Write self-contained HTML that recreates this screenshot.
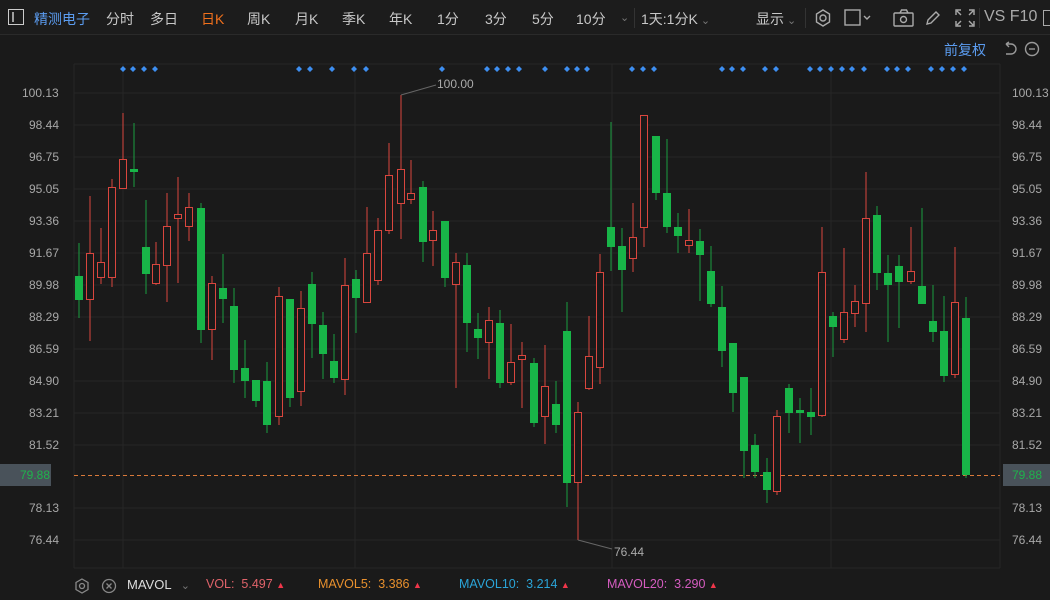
<!DOCTYPE html>
<html><head><meta charset="utf-8"><style>
*{margin:0;padding:0;box-sizing:border-box}
body{width:1050px;height:600px;background:#1a1a1a;overflow:hidden;font-family:"Liberation Sans","Noto Sans CJK SC",sans-serif;color:#bbb;position:relative}
.top{position:absolute;left:0;top:0;width:1050px;height:35px;background:#1c1c1c;border-bottom:1px solid #2a2a2a}
.t{position:absolute;top:9px;font-size:14px;color:#c8c8c8;white-space:nowrap}
.ax{position:absolute;font-size:12px;color:#a8a8a8}
.bot{position:absolute;top:577px;font-size:12.5px;white-space:nowrap}
</style></head><body>
<div class="top"></div>
<svg style="position:absolute;left:8px;top:9px" width="16" height="16"><rect x="0.5" y="0.5" width="15" height="15" fill="none" stroke="#ccc"/><line x1="5" y1="3" x2="5" y2="13" stroke="#ccc" stroke-width="1.5"/></svg>
<div class="t" style="left:34px;color:#5b9cf0">精测电子</div>
<div class="t" style="left:106px">分时</div>
<div class="t" style="left:150px">多日</div>
<div class="t" style="left:201px;color:#f0701c">日K</div>
<div class="t" style="left:247px">周K</div>
<div class="t" style="left:295px">月K</div>
<div class="t" style="left:342px">季K</div>
<div class="t" style="left:389px">年K</div>
<div class="t" style="left:437px">1分</div>
<div class="t" style="left:485px">3分</div>
<div class="t" style="left:532px">5分</div>
<div class="t" style="left:576px">10分</div>
<div class="t" style="left:620px;color:#777;font-size:11px;top:11px">⌄</div>
<div style="position:absolute;left:634px;top:8px;width:1px;height:20px;background:#333"></div>
<div class="t" style="left:641px">1天:1分K<span style="color:#777;font-size:11px"> ⌄</span></div>
<div class="t" style="left:756px">显示<span style="color:#777;font-size:11px"> ⌄</span></div>
<div style="position:absolute;left:805px;top:8px;width:1px;height:20px;background:#333"></div>
<svg style="position:absolute;left:813px;top:8px" width="20" height="20" fill="none" stroke="#aaa" stroke-width="1.4"><path d="M10 2l6.5 4v8L10 18l-6.5-4V6z"/><circle cx="10" cy="10" r="3"/></svg>
<svg style="position:absolute;left:844px;top:9px" width="30" height="18" fill="none" stroke="#aaa" stroke-width="1.4"><rect x="1" y="1" width="15" height="15"/><path d="M20 7l3 3 3-3"/></svg>
<svg style="position:absolute;left:893px;top:9px" width="22" height="18" fill="none" stroke="#aaa" stroke-width="1.4"><rect x="1" y="4" width="19" height="13" rx="1"/><path d="M7 4l1.5-3h5L15 4"/><circle cx="10.5" cy="10.5" r="3"/></svg>
<svg style="position:absolute;left:924px;top:9px" width="18" height="18" fill="none" stroke="#aaa" stroke-width="1.4"><path d="M3 15l1-4L12 3l3 3-8 8z"/></svg>
<svg style="position:absolute;left:955px;top:9px" width="20" height="18" fill="none" stroke="#aaa" stroke-width="1.4"><path d="M1 6V1h5M14 1h5v5M19 12v5h-5M6 17H1v-5M2 2l4 4M18 2l-4 4M18 16l-4-4M2 16l4-4"/></svg>
<div style="position:absolute;left:979px;top:8px;width:1px;height:20px;background:#333"></div>
<div class="t" style="left:984px;font-size:16px;top:8px;color:#aaa">VS F10</div>
<svg style="position:absolute;left:1043px;top:10px" width="7" height="16"><rect x="0.5" y="0.5" width="10" height="15" fill="none" stroke="#aaa"/></svg>
<div class="t" style="left:944px;top:40px;color:#5b9cf0">前复权</div>
<svg style="position:absolute;left:1002px;top:41px" width="48" height="16" fill="none" stroke="#999" stroke-width="1.4"><path d="M4 3h5a5 5 0 0 1 0 10H4M4 3l3-2M4 3l3 3"/><circle cx="30" cy="8" r="6.5"/><line x1="27" y1="8" x2="33" y2="8"/></svg>

<svg style="position:absolute;left:0;top:0" width="1050" height="600">
<g stroke="#262626" stroke-width="1">
<line x1="74" y1="93" x2="1000" y2="93"/><line x1="74" y1="125" x2="1000" y2="125"/><line x1="74" y1="157" x2="1000" y2="157"/><line x1="74" y1="189" x2="1000" y2="189"/><line x1="74" y1="221" x2="1000" y2="221"/><line x1="74" y1="253" x2="1000" y2="253"/><line x1="74" y1="285" x2="1000" y2="285"/><line x1="74" y1="317" x2="1000" y2="317"/><line x1="74" y1="349" x2="1000" y2="349"/><line x1="74" y1="381" x2="1000" y2="381"/><line x1="74" y1="413" x2="1000" y2="413"/><line x1="74" y1="445" x2="1000" y2="445"/><line x1="74" y1="508" x2="1000" y2="508"/><line x1="74" y1="540" x2="1000" y2="540"/>
<line x1="74" y1="64" x2="74" y2="568"/><line x1="123" y1="64" x2="123" y2="568"/><line x1="355" y1="64" x2="355" y2="568"/><line x1="612" y1="64" x2="612" y2="568"/><line x1="831" y1="64" x2="831" y2="568"/><line x1="1000" y1="64" x2="1000" y2="568"/>
<line x1="74" y1="64" x2="1000" y2="64"/><line x1="74" y1="568" x2="1000" y2="568"/>
</g>
<g fill="#3d8ef0">
<g id="d"></g>
<path d="M123 66l3 3-3 3-3-3zM133 66l3 3-3 3-3-3zM144 66l3 3-3 3-3-3zM155 66l3 3-3 3-3-3zM299 66l3 3-3 3-3-3zM310 66l3 3-3 3-3-3zM332 66l3 3-3 3-3-3zM354 66l3 3-3 3-3-3zM366 66l3 3-3 3-3-3zM442 66l3 3-3 3-3-3zM487 66l3 3-3 3-3-3zM497 66l3 3-3 3-3-3zM508 66l3 3-3 3-3-3zM519 66l3 3-3 3-3-3zM545 66l3 3-3 3-3-3zM567 66l3 3-3 3-3-3zM577 66l3 3-3 3-3-3zM587 66l3 3-3 3-3-3zM632 66l3 3-3 3-3-3zM643 66l3 3-3 3-3-3zM654 66l3 3-3 3-3-3zM722 66l3 3-3 3-3-3zM732 66l3 3-3 3-3-3zM743 66l3 3-3 3-3-3zM765 66l3 3-3 3-3-3zM776 66l3 3-3 3-3-3zM810 66l3 3-3 3-3-3zM820 66l3 3-3 3-3-3zM831 66l3 3-3 3-3-3zM842 66l3 3-3 3-3-3zM852 66l3 3-3 3-3-3zM864 66l3 3-3 3-3-3zM887 66l3 3-3 3-3-3zM897 66l3 3-3 3-3-3zM908 66l3 3-3 3-3-3zM931 66l3 3-3 3-3-3zM942 66l3 3-3 3-3-3zM953 66l3 3-3 3-3-3zM964 66l3 3-3 3-3-3z"/>
</g>
<line x1="74" y1="475.5" x2="1000" y2="475.5" stroke="#d9793a" stroke-dasharray="4,3"/>
<!-- green -->
<g stroke="#1a9e40" fill="#18b548">
<line x1="79" y1="243" x2="79" y2="318"/><rect x="75" y="276" width="8" height="24" stroke="none"/>
<line x1="134" y1="123" x2="134" y2="187"/><rect x="130" y="169" width="8" height="3" stroke="none"/>
<line x1="146" y1="200" x2="146" y2="294"/><rect x="142" y="247" width="8" height="27" stroke="none"/>
<line x1="201" y1="203" x2="201" y2="343"/><rect x="197" y="208" width="8" height="122" stroke="none"/>
<line x1="223" y1="254" x2="223" y2="323"/><rect x="219" y="288" width="8" height="11" stroke="none"/>
<line x1="234" y1="288" x2="234" y2="383"/><rect x="230" y="306" width="8" height="64" stroke="none"/>
<line x1="245" y1="340" x2="245" y2="398"/><rect x="241" y="368" width="8" height="13" stroke="none"/>
<line x1="256" y1="380" x2="256" y2="407"/><rect x="252" y="380" width="8" height="21" stroke="none"/>
<line x1="267" y1="362" x2="267" y2="433"/><rect x="263" y="381" width="8" height="44" stroke="none"/>
<line x1="290" y1="299" x2="290" y2="407"/><rect x="286" y="299" width="8" height="99" stroke="none"/>
<line x1="312" y1="272" x2="312" y2="358"/><rect x="308" y="284" width="8" height="40" stroke="none"/>
<line x1="323" y1="312" x2="323" y2="379"/><rect x="319" y="325" width="8" height="29" stroke="none"/>
<line x1="334" y1="334" x2="334" y2="383"/><rect x="330" y="361" width="8" height="17" stroke="none"/>
<line x1="356" y1="270" x2="356" y2="333"/><rect x="352" y="279" width="8" height="19" stroke="none"/>
<line x1="423" y1="181" x2="423" y2="262"/><rect x="419" y="187" width="8" height="55" stroke="none"/>
<line x1="445" y1="221" x2="445" y2="287"/><rect x="441" y="221" width="8" height="57" stroke="none"/>
<line x1="467" y1="253" x2="467" y2="352"/><rect x="463" y="265" width="8" height="58" stroke="none"/>
<line x1="478" y1="313" x2="478" y2="359"/><rect x="474" y="329" width="8" height="9" stroke="none"/>
<line x1="500" y1="310" x2="500" y2="388"/><rect x="496" y="323" width="8" height="60" stroke="none"/>
<line x1="534" y1="358" x2="534" y2="427"/><rect x="530" y="363" width="8" height="60" stroke="none"/>
<line x1="556" y1="381" x2="556" y2="433"/><rect x="552" y="404" width="8" height="21" stroke="none"/>
<line x1="567" y1="302" x2="567" y2="507"/><rect x="563" y="331" width="8" height="152" stroke="none"/>
<line x1="611" y1="122" x2="611" y2="271"/><rect x="607" y="227" width="8" height="20" stroke="none"/>
<line x1="622" y1="228" x2="622" y2="312"/><rect x="618" y="246" width="8" height="24" stroke="none"/>
<line x1="656" y1="136" x2="656" y2="200"/><rect x="652" y="136" width="8" height="57" stroke="none"/>
<line x1="667" y1="139" x2="667" y2="233"/><rect x="663" y="193" width="8" height="34" stroke="none"/>
<line x1="678" y1="213" x2="678" y2="253"/><rect x="674" y="227" width="8" height="9" stroke="none"/>
<line x1="700" y1="229" x2="700" y2="301"/><rect x="696" y="241" width="8" height="14" stroke="none"/>
<line x1="711" y1="246" x2="711" y2="307"/><rect x="707" y="271" width="8" height="33" stroke="none"/>
<line x1="722" y1="286" x2="722" y2="367"/><rect x="718" y="307" width="8" height="44" stroke="none"/>
<line x1="733" y1="343" x2="733" y2="412"/><rect x="729" y="343" width="8" height="50" stroke="none"/>
<line x1="744" y1="377" x2="744" y2="478"/><rect x="740" y="377" width="8" height="74" stroke="none"/>
<line x1="755" y1="434" x2="755" y2="478"/><rect x="751" y="445" width="8" height="27" stroke="none"/>
<line x1="767" y1="458" x2="767" y2="503"/><rect x="763" y="472" width="8" height="18" stroke="none"/>
<line x1="789" y1="384" x2="789" y2="433"/><rect x="785" y="388" width="8" height="25" stroke="none"/>
<line x1="800" y1="398" x2="800" y2="443"/><rect x="796" y="410" width="8" height="3" stroke="none"/>
<line x1="811" y1="388" x2="811" y2="435"/><rect x="807" y="412" width="8" height="5" stroke="none"/>
<line x1="833" y1="312" x2="833" y2="357"/><rect x="829" y="316" width="8" height="11" stroke="none"/>
<line x1="877" y1="206" x2="877" y2="290"/><rect x="873" y="215" width="8" height="58" stroke="none"/>
<line x1="888" y1="255" x2="888" y2="342"/><rect x="884" y="273" width="8" height="12" stroke="none"/>
<line x1="899" y1="255" x2="899" y2="328"/><rect x="895" y="266" width="8" height="16" stroke="none"/>
<line x1="922" y1="208" x2="922" y2="304"/><rect x="918" y="286" width="8" height="18" stroke="none"/>
<line x1="933" y1="285" x2="933" y2="342"/><rect x="929" y="321" width="8" height="11" stroke="none"/>
<line x1="944" y1="296" x2="944" y2="382"/><rect x="940" y="331" width="8" height="45" stroke="none"/>
<line x1="966" y1="297" x2="966" y2="478"/><rect x="962" y="318" width="8" height="157" stroke="none"/>
</g>
<!-- red -->
<g stroke="#d9463e" fill="#1a1a1a">
<line x1="90" y1="196" x2="90" y2="341"/><rect x="86.5" y="253.5" width="7" height="46"/>
<line x1="101" y1="228" x2="101" y2="284"/><rect x="97.5" y="262.5" width="7" height="15"/>
<line x1="112" y1="179" x2="112" y2="287"/><rect x="108.5" y="187.5" width="7" height="90"/>
<line x1="123" y1="113" x2="123" y2="188"/><rect x="119.5" y="159.5" width="7" height="29"/>
<line x1="156" y1="242" x2="156" y2="285"/><rect x="152.5" y="264.5" width="7" height="19"/>
<line x1="167" y1="193" x2="167" y2="302"/><rect x="163.5" y="226.5" width="7" height="39"/>
<line x1="178" y1="177" x2="178" y2="283"/><rect x="174.5" y="214.5" width="7" height="4"/>
<line x1="189" y1="193" x2="189" y2="241"/><rect x="185.5" y="207.5" width="7" height="19"/>
<line x1="212" y1="276" x2="212" y2="360"/><rect x="208.5" y="283.5" width="7" height="46"/>
<line x1="279" y1="287" x2="279" y2="425"/><rect x="275.5" y="296.5" width="7" height="120"/>
<line x1="301" y1="291" x2="301" y2="406"/><rect x="297.5" y="308.5" width="7" height="83"/>
<line x1="345" y1="258" x2="345" y2="395"/><rect x="341.5" y="285.5" width="7" height="94"/>
<line x1="367" y1="207" x2="367" y2="303"/><rect x="363.5" y="253.5" width="7" height="49"/>
<line x1="378" y1="218" x2="378" y2="285"/><rect x="374.5" y="230.5" width="7" height="50"/>
<line x1="389" y1="143" x2="389" y2="234"/><rect x="385.5" y="175.5" width="7" height="55"/>
<line x1="401" y1="95" x2="401" y2="239"/><rect x="397.5" y="169.5" width="7" height="34"/>
<line x1="411" y1="160" x2="411" y2="204"/><rect x="407.5" y="193.5" width="7" height="6"/>
<line x1="433" y1="211" x2="433" y2="266"/><rect x="429.5" y="230.5" width="7" height="10"/>
<line x1="456" y1="253" x2="456" y2="388"/><rect x="452.5" y="262.5" width="7" height="22"/>
<line x1="489" y1="307" x2="489" y2="379"/><rect x="485.5" y="320.5" width="7" height="22"/>
<line x1="511" y1="324" x2="511" y2="385"/><rect x="507.5" y="362.5" width="7" height="20"/>
<line x1="522" y1="342" x2="522" y2="408"/><rect x="518.5" y="355.5" width="7" height="4"/>
<line x1="545" y1="345" x2="545" y2="444"/><rect x="541.5" y="386.5" width="7" height="30"/>
<line x1="578" y1="402" x2="578" y2="540"/><rect x="574.5" y="412.5" width="7" height="70"/>
<line x1="589" y1="316" x2="589" y2="390"/><rect x="585.5" y="356.5" width="7" height="32"/>
<line x1="600" y1="254" x2="600" y2="384"/><rect x="596.5" y="272.5" width="7" height="95"/>
<line x1="633" y1="203" x2="633" y2="272"/><rect x="629.5" y="237.5" width="7" height="21"/>
<line x1="644" y1="115" x2="644" y2="247"/><rect x="640.5" y="115.5" width="7" height="112"/>
<line x1="689" y1="209" x2="689" y2="253"/><rect x="685.5" y="240.5" width="7" height="5"/>
<line x1="777" y1="410" x2="777" y2="495"/><rect x="773.5" y="416.5" width="7" height="75"/>
<line x1="822" y1="227" x2="822" y2="417"/><rect x="818.5" y="272.5" width="7" height="143"/>
<line x1="844" y1="248" x2="844" y2="343"/><rect x="840.5" y="312.5" width="7" height="27"/>
<line x1="855" y1="285" x2="855" y2="327"/><rect x="851.5" y="301.5" width="7" height="12"/>
<line x1="866" y1="172" x2="866" y2="332"/><rect x="862.5" y="218.5" width="7" height="85"/>
<line x1="911" y1="227" x2="911" y2="284"/><rect x="907.5" y="271.5" width="7" height="10"/>
<line x1="955" y1="247" x2="955" y2="378"/><rect x="951.5" y="302.5" width="7" height="72"/>
</g>
<g stroke="#666" fill="none"><path d="M401 95L436 85"/><path d="M578 540L612 549"/></g>
<text x="437" y="88" fill="#aaa" font-size="12" font-family="Liberation Sans">100.00</text>
<text x="614" y="556" fill="#aaa" font-size="12" font-family="Liberation Sans">76.44</text>
</svg>

<div class="ax" style="left:22px;top:86px">100.13</div><div class="ax" style="left:29px;top:118px">98.44</div><div class="ax" style="left:29px;top:150px">96.75</div><div class="ax" style="left:29px;top:182px">95.05</div><div class="ax" style="left:29px;top:214px">93.36</div><div class="ax" style="left:29px;top:246px">91.67</div><div class="ax" style="left:29px;top:278px">89.98</div><div class="ax" style="left:29px;top:310px">88.29</div><div class="ax" style="left:29px;top:342px">86.59</div><div class="ax" style="left:29px;top:374px">84.90</div><div class="ax" style="left:29px;top:406px">83.21</div><div class="ax" style="left:29px;top:438px">81.52</div><div class="ax" style="left:29px;top:501px">78.13</div><div class="ax" style="left:29px;top:533px">76.44</div>
<div style="position:absolute;left:0;top:464px;width:51px;height:22px;background:#49525a"></div><div class="ax" style="left:20px;top:468px;color:#1fb34c">79.88</div>
<div class="ax" style="left:1012px;top:86px">100.13</div><div class="ax" style="left:1012px;top:118px">98.44</div><div class="ax" style="left:1012px;top:150px">96.75</div><div class="ax" style="left:1012px;top:182px">95.05</div><div class="ax" style="left:1012px;top:214px">93.36</div><div class="ax" style="left:1012px;top:246px">91.67</div><div class="ax" style="left:1012px;top:278px">89.98</div><div class="ax" style="left:1012px;top:310px">88.29</div><div class="ax" style="left:1012px;top:342px">86.59</div><div class="ax" style="left:1012px;top:374px">84.90</div><div class="ax" style="left:1012px;top:406px">83.21</div><div class="ax" style="left:1012px;top:438px">81.52</div><div class="ax" style="left:1012px;top:501px">78.13</div><div class="ax" style="left:1012px;top:533px">76.44</div>
<div style="position:absolute;left:1003px;top:464px;width:47px;height:22px;background:#49525a"></div><div class="ax" style="left:1012px;top:468px;color:#1fb34c">79.88</div>

<svg style="position:absolute;left:74px;top:577px" width="50" height="18" fill="none" stroke="#888" stroke-width="1.3"><path d="M8 2l6 3.5v7L8 16l-6-3.5v-7z"/><circle cx="8" cy="9" r="2.5"/><circle cx="35" cy="9" r="6.5"/><path d="M32.5 6.5l5 5M37.5 6.5l-5 5"/></svg>
<div class="bot" style="left:127px;color:#ddd;font-size:13px">MAVOL <span style="color:#777;font-size:11px;margin-left:6px">⌄</span></div>
<div class="bot" style="left:206px;color:#e0636a">VOL: &nbsp;5.497 <span style="color:#f0364a;font-size:9px">▲</span></div>
<div class="bot" style="left:318px;color:#e8902d">MAVOL5: &nbsp;3.386 <span style="color:#f0364a;font-size:9px">▲</span></div>
<div class="bot" style="left:459px;color:#2aa4d8">MAVOL10: &nbsp;3.214 <span style="color:#f0364a;font-size:9px">▲</span></div>
<div class="bot" style="left:607px;color:#d55cc0">MAVOL20: &nbsp;3.290 <span style="color:#f0364a;font-size:9px">▲</span></div>
</body></html>
